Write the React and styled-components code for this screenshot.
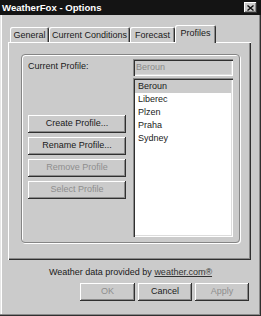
import React from 'react';
import styled, { createGlobalStyle } from 'styled-components';

const GlobalStyle = createGlobalStyle`
    html, body {
        margin: 0;
        padding: 0;
        background: #cbcbcb;
    }
    body {
        font-family: "Liberation Sans", Arial, sans-serif;
        font-size: 9px;
        color: #111;
    }
`

const Window = styled.div`
    width: 261px;
    height: 316px;
    box-sizing: border-box;
    background: #cbcbcb;
    display: flex;
    flex-direction: column;
    box-shadow: inset -1px -1px 0 #303030, inset -2px -2px 0 #8a8a8a, inset 1px 0 0 #e6e6e6, inset 2px 0 0 #fff;
`

const TitleBar = styled.div`
    height: 15px;
    background: #141414;
    display: flex;
    align-items: center;
    justify-content: space-between;
    padding: 0 4px 0 2px;
`

const Title = styled.span`
    color: #fff;
    font-weight: bold;
    font-size: 9.6px;
    line-height: 15px;
`

const CloseButton = styled.div`
    width: 13px;
    height: 11px;
    box-sizing: border-box;
    background: #cbcbcb;
    box-shadow: inset -1px -1px 0 #303030, inset 1px 1px 0 #fff, inset -2px -2px 0 #8a8a8a;
    display: flex;
    align-items: center;
    justify-content: center;
`

const Body = styled.div`
    flex: 1;
    padding: 10px 8px 0 8px;
    display: flex;
    flex-direction: column;
`

const TabStrip = styled.div`
    height: 17px;
    display: flex;
    align-items: flex-end;
    padding-left: 2px;
    position: relative;
    z-index: 1;
`

const Tab = styled.div`
    width: ${props => props.width}px;
    box-sizing: border-box;
    height: ${props => props.selected ? 18 : 15}px;
    margin-bottom: ${props => props.selected ? -1 : 0}px;
    background: #cbcbcb;
    border-radius: 2px 2px 0 0;
    box-shadow: inset 1px 1px 0 #fff, inset -1px 0 0 #303030, inset -2px 0 0 #8a8a8a;
    text-align: center;
    line-height: ${props => props.selected ? 15 : 14}px;
    padding-top: 1px;
    white-space: nowrap;
    color: #1a1a1a;
`

const Panel = styled.div`
    width: 243px;
    height: 218px;
    box-sizing: border-box;
    box-shadow: inset 1px 1px 0 #fff, inset -1px -1px 0 #303030, inset -2px -2px 0 #8a8a8a;
    padding: 12px 0 0 13px;
`

const Group = styled.div`
    width: 219px;
    height: 189px;
    box-sizing: border-box;
    border: 1px solid #858585;
    border-radius: 4px;
    box-shadow: 1px 1px 0 #fff, inset 1px 1px 0 #fff;
    padding: 4px 0 0 6px;
`

const Grid = styled.div`
    display: grid;
    grid-template-columns: 98px 100px;
    grid-template-rows: 17px 159px;
    column-gap: 7px;
    row-gap: 2px;
`

const Label = styled.div`
    line-height: 13px;
    padding-top: 1px;
    color: #1a1a1a;
`

const sunken = `
    box-sizing: border-box;
    box-shadow: inset 1px 1px 0 #8a8a8a, inset 2px 2px 0 #303030, inset -1px -1px 0 #fff, inset -2px -2px 0 #dcdcdc;
`

const TextField = styled.div`
    ${sunken}
    background: #cbcbcb;
    color: #8a8a8a;
    line-height: 17px;
    padding-left: 3px;
`

const ListBox = styled.div`
    ${sunken}
    background: #fff;
    padding: 2px 2px;
`

const ListItem = styled.div`
    height: 13px;
    line-height: 13px;
    padding-left: 3px;
    background: ${props => props.selected ? '#cbcbcb' : 'transparent'};
    color: #1a1a1a;
`

const ButtonColumn = styled.div`
    display: flex;
    flex-direction: column;
    gap: 4px;
    padding-top: 37px;
`

const Button = styled.div`
    width: ${props => props.width || 98}px;
    height: 18px;
    box-sizing: border-box;
    background: #cbcbcb;
    box-shadow: inset -1px -1px 0 #303030, inset 1px 1px 0 #fff, inset -2px -2px 0 #8a8a8a;
    text-align: center;
    line-height: 17px;
    color: ${props => props.disabled ? '#8e8e8e' : '#1a1a1a'};
`

const Credit = styled.div`
    margin-top: 6px;
    line-height: 12px;
    text-align: center;
    color: #1a1a1a;
`

const Link = styled.span`
    text-decoration: underline;
    color: #333;
`

const ButtonRow = styled.div`
    margin-top: 5px;
    display: flex;
    justify-content: flex-end;
    gap: 3px;
    padding-right: 4px;
`

const tabs = [
    { label: 'General', width: 39 },
    { label: 'Current Conditions', width: 81 },
    { label: 'Forecast', width: 45 },
    { label: 'Profiles', width: 41, selected: true }
]

const profiles = ['Beroun', 'Liberec', 'Plzen', 'Praha', 'Sydney']

const App = () => {
    return (
        <>
            <GlobalStyle />
            <Window>
                <TitleBar>
                    <Title>WeatherFox - Options</Title>
                    <CloseButton>
                        <svg width="7" height="6" viewBox="0 0 7 6">
                            <path d="M0.5 0.5 L6.5 5.5 M6.5 0.5 L0.5 5.5" stroke="#111" strokeWidth="1.4" />
                        </svg>
                    </CloseButton>
                </TitleBar>
                <Body>
                    <TabStrip>
                        {tabs.map(tab => (
                            <Tab key={tab.label} width={tab.width} selected={tab.selected}>{tab.label}</Tab>
                        ))}
                    </TabStrip>
                    <Panel>
                        <Group>
                            <Grid>
                                <Label>Current Profile:</Label>
                                <TextField>Beroun</TextField>
                                <ButtonColumn>
                                    <Button>Create Profile...</Button>
                                    <Button>Rename Profile...</Button>
                                    <Button disabled>Remove Profile</Button>
                                    <Button disabled>Select Profile</Button>
                                </ButtonColumn>
                                <ListBox>
                                    {profiles.map((name, i) => (
                                        <ListItem key={name} selected={i === 0}>{name}</ListItem>
                                    ))}
                                </ListBox>
                            </Grid>
                        </Group>
                    </Panel>
                    <Credit>Weather data provided by <Link>weather.com®</Link></Credit>
                    <ButtonRow>
                        <Button width={55} disabled>OK</Button>
                        <Button width={54}>Cancel</Button>
                        <Button width={54} disabled>Apply</Button>
                    </ButtonRow>
                </Body>
            </Window>
        </>
    )
}

export default App;
